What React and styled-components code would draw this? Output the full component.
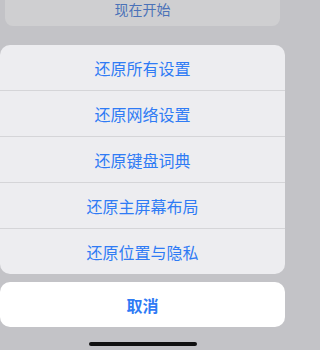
import React from 'react';
import styled, { createGlobalStyle } from 'styled-components';

const GlobalStyle = createGlobalStyle`
  html, body {
    margin: 0;
    padding: 0;
    background: #c3c3c7;
  }
  body {
    font-family: "Noto Sans CJK SC", "Noto Sans", sans-serif;
  }
`;

const Screen = styled.div`
  width: 285px;
  height: 350px;
  overflow: hidden;
  background: #c3c3c7;
  display: flex;
  flex-direction: column;
`;

const BehindCard = styled.div`
  margin: 0 5px;
  height: 26px;
  background: #cfcfd1;
  border-radius: 0 0 8px 8px;
  display: flex;
  align-items: flex-start;
  justify-content: center;
  padding-top: 0;
  color: #4b72b8;
  font-size: 14px;
  line-height: 18px;
`;

const Sheet = styled.div`
  margin-top: 19px;
  background: #ededf0;
  border-radius: 10px;
  display: flex;
  flex-direction: column;
  overflow: hidden;
`;

const Action = styled.div`
  height: 45px;
  display: flex;
  align-items: center;
  justify-content: center;
  color: ${p => p.$color || '#2f7bf5'};
  font-size: 16px;
  font-weight: ${p => (p.$bold ? 600 : 400)};
  border-top: ${p => (p.$first ? 'none' : '1px solid #d5d5d8')};
`;

const CancelButton = styled(Action)`
  margin-top: 8px;
  background: #ffffff;
  border-radius: 10px;
  border-top: none;
`;

const HomeBar = styled.div`
  flex: 1;
  display: flex;
  align-items: flex-end;
  justify-content: center;
  padding-bottom: 4px;
`;

const Indicator = styled.div`
  width: 108px;
  height: 4px;
  border-radius: 2px;
  background: #111;
`;

const actions = ['还原所有设置', '还原网络设置', '还原键盘词典', '还原主屏幕布局', '还原位置与隐私'];

export default function App() {
  return (
    <>
      <GlobalStyle />
      <Screen>
        <BehindCard>现在开始</BehindCard>
        <Sheet>
          {actions.map((label, i) => (
            <Action key={label} $first={i === 0}>
              {label}
            </Action>
          ))}
        </Sheet>
        <CancelButton $bold>取消</CancelButton>
        <HomeBar>
          <Indicator />
        </HomeBar>
      </Screen>
    </>
  );
}
